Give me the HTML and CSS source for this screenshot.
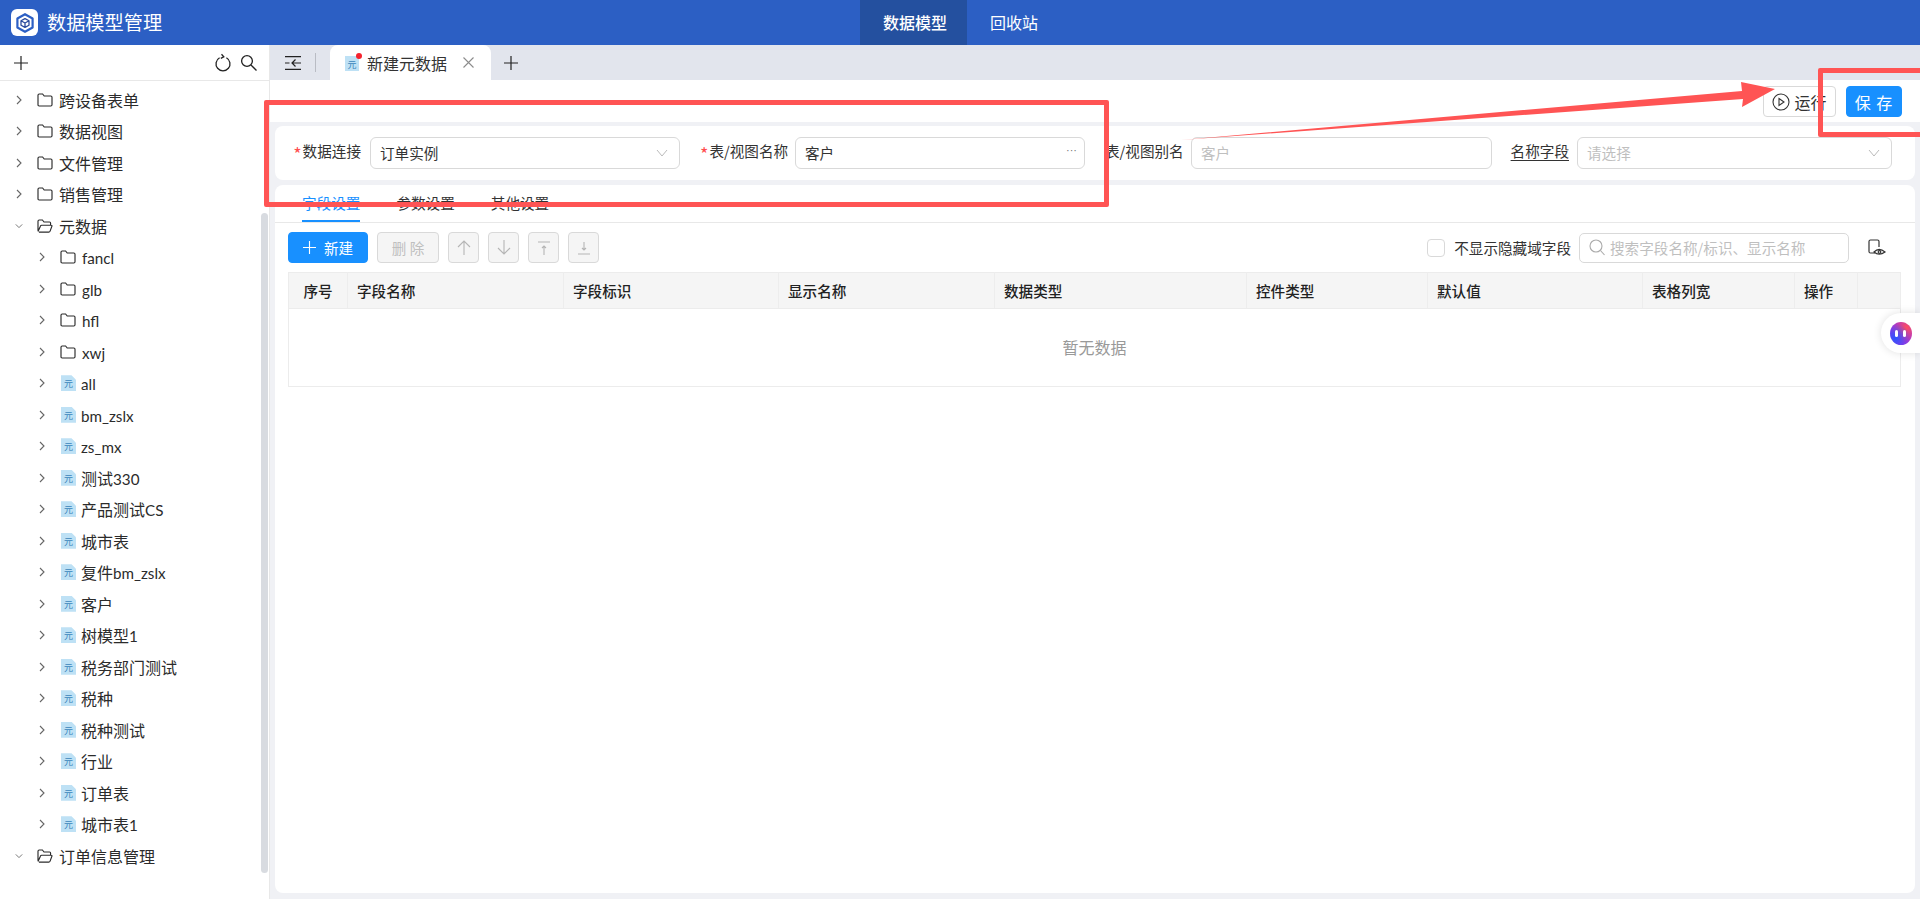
FILE: index.html
```html
<!DOCTYPE html>
<html lang="zh-CN">
<head>
    <meta charset="UTF-8">
    <title>数据模型管理</title>
    <link rel="stylesheet" href="styles.css">
</head>
<body>
    <svg class="icon-defs" aria-hidden="true">
        <symbol id="ic-right" viewBox="0 0 8 10"><path d="M2 1l4 4-4 4" fill="none" stroke="#666" stroke-width="1.1"/></symbol>
        <symbol id="ic-down" viewBox="0 0 10 8"><path d="M1 2l4 4 4-4" fill="none" stroke="#666" stroke-width="1.1"/></symbol>
        <symbol id="ic-folder" viewBox="0 0 16 14"><path d="M1 2.2q0-1.2 1.2-1.2h3.4l1.6 2h6.6q1.2 0 1.2 1.2v7.6q0 1.2-1.2 1.2H2.2Q1 13 1 11.8z" fill="none" stroke="#2b2b2b" stroke-width="1.15"/></symbol>
        <symbol id="ic-folder-open" viewBox="0 0 16 14"><path d="M1 11.8V2.2Q1 1 2.2 1h3.2l1.6 2h5.6q1 0 1 1.2V6M1 12.6l2.4-5.4q.3-1 1.3-1h9.4q1.2 0 .8 1.1l-1.8 4.8q-.4 1-1.4 1H1.9" fill="none" stroke="#2b2b2b" stroke-width="1.15"/></symbol>
        <symbol id="ic-plus" viewBox="0 0 14 14"><path d="M7 0v14M0 7h14" fill="none" stroke="currentColor" stroke-width="1.2"/></symbol>
    </svg>

    <header class="topbar">
        <div class="brand">
            <span class="brand-logo">
                <svg width="20" height="20" viewBox="0 0 20 20" fill="none" stroke="#2c5fc4">
                    <path d="M10 1.2l7.6 4.3v9L10 18.8l-7.6-4.3v-9z" stroke-width="2.2" stroke-linejoin="round"/>
                    <path d="M10 5.6l4 2.2v4.4l-4 2.2-4-2.2V7.800zM6 7.800l4 2.2 4-2.200M10 10v4.400" stroke="#2a4a9c" stroke-width="1.3" stroke-linejoin="round"/>
                </svg>
            </span>
            <span class="brand-title">数据模型管理</span>
        </div>
        <nav class="topnav">
            <a class="topnav-item active">数据模型</a>
            <a class="topnav-item">回收站</a>
        </nav>
    </header>

    <div class="layout">
        <aside class="sidebar">
            <div class="sidebar-tools">
                <svg class="tool-add" width="14" height="14"><use href="#ic-plus"/></svg>
                <svg class="tool-refresh" width="18" height="20" viewBox="0 0 18 20" fill="none" stroke="#222" stroke-width="1.3">
                    <path d="M5.600 4.700a7 7 0 1 0 6.800 0"/>
                    <path d="M7.500 1.200l2.300 2.600-3 1.600"/>
                </svg>
                <svg class="tool-search" width="18" height="18" viewBox="0 0 18 18" fill="none" stroke="#222" stroke-width="1.3">
                    <circle cx="7" cy="7" r="5.400"/>
                    <path d="M11 11l5.500 5.500"/>
                </svg>
            </div>
            <ul class="tree">
                <li class="tree-row"><svg class="tree-arrow"><use href="#ic-right"/></svg><svg class="tree-folder"><use href="#ic-folder"/></svg><span>跨设备表单</span></li>
                <li class="tree-row"><svg class="tree-arrow"><use href="#ic-right"/></svg><svg class="tree-folder"><use href="#ic-folder"/></svg><span>数据视图</span></li>
                <li class="tree-row"><svg class="tree-arrow"><use href="#ic-right"/></svg><svg class="tree-folder"><use href="#ic-folder"/></svg><span>文件管理</span></li>
                <li class="tree-row"><svg class="tree-arrow"><use href="#ic-right"/></svg><svg class="tree-folder"><use href="#ic-folder"/></svg><span>销售管理</span></li>
                <li class="tree-row"><svg class="tree-arrow"><use href="#ic-down"/></svg><svg class="tree-folder"><use href="#ic-folder-open"/></svg><span>元数据</span></li>
                <li class="tree-row sub"><svg class="tree-arrow"><use href="#ic-right"/></svg><svg class="tree-folder"><use href="#ic-folder"/></svg><span><b class="lat">fancl</b></span></li>
                <li class="tree-row sub"><svg class="tree-arrow"><use href="#ic-right"/></svg><svg class="tree-folder"><use href="#ic-folder"/></svg><span><b class="lat">glb</b></span></li>
                <li class="tree-row sub"><svg class="tree-arrow"><use href="#ic-right"/></svg><svg class="tree-folder"><use href="#ic-folder"/></svg><span><b class="lat">hfl</b></span></li>
                <li class="tree-row sub"><svg class="tree-arrow"><use href="#ic-right"/></svg><svg class="tree-folder"><use href="#ic-folder"/></svg><span><b class="lat">xwj</b></span></li>
                <li class="tree-row sub"><svg class="tree-arrow"><use href="#ic-right"/></svg><i class="doc-icon">元</i><span><b class="lat">all</b></span></li>
                <li class="tree-row sub"><svg class="tree-arrow"><use href="#ic-right"/></svg><i class="doc-icon">元</i><span><b class="lat">bm_zslx</b></span></li>
                <li class="tree-row sub"><svg class="tree-arrow"><use href="#ic-right"/></svg><i class="doc-icon">元</i><span><b class="lat">zs_mx</b></span></li>
                <li class="tree-row sub"><svg class="tree-arrow"><use href="#ic-right"/></svg><i class="doc-icon">元</i><span>测试<b class="lat">330</b></span></li>
                <li class="tree-row sub"><svg class="tree-arrow"><use href="#ic-right"/></svg><i class="doc-icon">元</i><span>产品测试<b class="lat">CS</b></span></li>
                <li class="tree-row sub"><svg class="tree-arrow"><use href="#ic-right"/></svg><i class="doc-icon">元</i><span>城市表</span></li>
                <li class="tree-row sub"><svg class="tree-arrow"><use href="#ic-right"/></svg><i class="doc-icon">元</i><span>复件<b class="lat">bm_zslx</b></span></li>
                <li class="tree-row sub"><svg class="tree-arrow"><use href="#ic-right"/></svg><i class="doc-icon">元</i><span>客户</span></li>
                <li class="tree-row sub"><svg class="tree-arrow"><use href="#ic-right"/></svg><i class="doc-icon">元</i><span>树模型<b class="lat">1</b></span></li>
                <li class="tree-row sub"><svg class="tree-arrow"><use href="#ic-right"/></svg><i class="doc-icon">元</i><span>税务部门测试</span></li>
                <li class="tree-row sub"><svg class="tree-arrow"><use href="#ic-right"/></svg><i class="doc-icon">元</i><span>税种</span></li>
                <li class="tree-row sub"><svg class="tree-arrow"><use href="#ic-right"/></svg><i class="doc-icon">元</i><span>税种测试</span></li>
                <li class="tree-row sub"><svg class="tree-arrow"><use href="#ic-right"/></svg><i class="doc-icon">元</i><span>行业</span></li>
                <li class="tree-row sub"><svg class="tree-arrow"><use href="#ic-right"/></svg><i class="doc-icon">元</i><span>订单表</span></li>
                <li class="tree-row sub"><svg class="tree-arrow"><use href="#ic-right"/></svg><i class="doc-icon">元</i><span>城市表<b class="lat">1</b></span></li>
                <li class="tree-row"><svg class="tree-arrow"><use href="#ic-down"/></svg><svg class="tree-folder"><use href="#ic-folder-open"/></svg><span>订单信息管理</span></li>
            </ul>
            <div class="sidebar-thumb"></div>
        </aside>

        <main class="main">
            <div class="tabbar">
                <button class="collapse-btn">
                    <svg width="16" height="14" viewBox="0 0 16 14" fill="none" stroke="#222" stroke-width="1.200">
                        <path d="M0 .6h16M0 13.400h16M0 7h4.500M16 7H7M10.500 3.500L7 7l3.500 3.500"/>
                    </svg>
                </button>
                <span class="tabbar-divider"></span>
                <div class="page-tab">
                    <i class="doc-icon tab-doc">元</i>
                    <span class="page-tab-dot"></span>
                    <span class="page-tab-name">新建元数据</span>
                    <svg class="page-tab-close" width="11" height="11" viewBox="0 0 11 11" fill="none" stroke="#8c8c8c" stroke-width="1.100">
                        <path d="M.5.500l10 10M10.500.500l-10 10"/>
                    </svg>
                </div>
                <svg class="tab-add" width="14" height="14"><use href="#ic-plus"/></svg>
            </div>

            <div class="actions">
                <button class="btn btn-run">
                    <svg width="18" height="18" viewBox="0 0 18 18" fill="none" stroke="#333" stroke-width="1.100">
                        <circle cx="9" cy="9" r="8"/>
                        <path d="M7 5.500l5 3.500-5 3.500z"/>
                    </svg>
                    运行
                </button>
                <button class="btn btn-save">保 存</button>
            </div>

            <div class="content">
                <section class="card form-card">
                    <div class="form-item item-conn">
                        <label class="form-label"><em>*</em>数据连接</label>
                        <div class="field">订单实例
                            <svg class="field-arrow" width="12" height="8" viewBox="0 0 12 8"><path d="M1 1l5 6 5-6" fill="none" stroke="#bbb"/></svg>
                        </div>
                    </div>
                    <div class="form-item item-table">
                        <label class="form-label"><em>*</em>表/视图名称</label>
                        <div class="field">客户<span class="field-more">···</span></div>
                    </div>
                    <div class="form-item item-alias">
                        <label class="form-label">表/视图别名</label>
                        <div class="field placeholder">客户</div>
                    </div>
                    <div class="form-item item-name">
                        <label class="form-label"><u>名称字段</u></label>
                        <div class="field placeholder">请选择
                            <svg class="field-arrow" width="12" height="8" viewBox="0 0 12 8"><path d="M1 1l5 6 5-6" fill="none" stroke="#bbb"/></svg>
                        </div>
                    </div>
                </section>

                <section class="card table-card">
                    <div class="sub-tabs">
                        <a class="sub-tab active">字段设置</a>
                        <a class="sub-tab">参数设置</a>
                        <a class="sub-tab">其他设置</a>
                    </div>

                    <div class="table-tools">
                        <button class="btn btn-primary">
                            <svg width="13" height="13"><use href="#ic-plus"/></svg>
                            新建
                        </button>
                        <button class="btn btn-disabled btn-delete">删 除</button>
                        <button class="btn btn-disabled btn-icon">
                            <svg width="14" height="15" viewBox="0 0 14 15" fill="none" stroke="#b5b5b5" stroke-width="1.100"><path d="M7 1v14M1 7l6-6 6 6"/></svg>
                        </button>
                        <button class="btn btn-disabled btn-icon">
                            <svg width="14" height="15" viewBox="0 0 14 15" fill="none" stroke="#b5b5b5" stroke-width="1.100"><path d="M7 0v14M1 8l6 6 6-6"/></svg>
                        </button>
                        <button class="btn btn-disabled btn-icon">
                            <svg width="12" height="14" viewBox="0 0 12 14" fill="none" stroke="#b5b5b5" stroke-width="1.100"><path d="M0 1h12M6 5v9M4 7l2-2 2 2"/></svg>
                        </button>
                        <button class="btn btn-disabled btn-icon">
                            <svg width="12" height="14" viewBox="0 0 12 14" fill="none" stroke="#b5b5b5" stroke-width="1.100"><path d="M0 13h12M6 1v8M4 7l2 2 2-2"/></svg>
                        </button>
                        <div class="tools-right">
                            <span class="checkbox"></span>
                            <span class="checkbox-label">不显示隐藏域字段</span>
                            <div class="search-box">
                                <svg width="16" height="17" viewBox="0 0 16 17" fill="none" stroke="#aaa" stroke-width="1.100"><circle cx="7" cy="7" r="6"/><path d="M11.500 11.500l4 4.500"/></svg>
                                搜索字段名称/标识、显示名称
                            </div>
                            <svg class="view-icon" width="18" height="17" viewBox="0 0 18 17" fill="none" stroke="#333" stroke-width="1.200">
                                <path d="M7 14H2.500Q1 14 1 12.500V2.500Q1 1 2.500 1h7Q11 1 11 2.500V8"/>
                                <path d="M6 13q5-5 11 0-6 4.500-11 0z"/>
                                <circle cx="11.500" cy="13" r="1.300"/>
                            </svg>
                        </div>
                    </div>

                    <table class="field-table">
                        <colgroup>
                            <col class="c-no"><col class="c-name"><col class="c-id"><col class="c-show"><col class="c-type">
                            <col class="c-ctrl"><col class="c-def"><col class="c-width"><col class="c-op"><col class="c-end">
                        </colgroup>
                        <thead>
                            <tr>
                                <th class="center">序号</th>
                                <th>字段名称</th>
                                <th>字段标识</th>
                                <th>显示名称</th>
                                <th>数据类型</th>
                                <th>控件类型</th>
                                <th>默认值</th>
                                <th>表格列宽</th>
                                <th>操作</th>
                                <th></th>
                            </tr>
                        </thead>
                        <tbody>
                            <tr><td class="empty" colspan="10">暂无数据</td></tr>
                        </tbody>
                    </table>
                </section>
            </div>
        </main>
    </div>

    <div class="assistant"><span class="assistant-face"><i></i><i></i></span></div>

    <!-- red annotations drawn on top of the screenshot -->
    <div class="mark mark-form"></div>
    <div class="mark mark-save"></div>
    <svg class="mark-arrow" width="1920" height="899">
        <polygon points="1181,140 1742,91 1741,82 1775,89 1742,107 1743,99" fill="#ff5454"/>
    </svg>
</body>
</html>
```

FILE: styles.css
```css
* {
    margin: 0;
    padding: 0;
    box-sizing: border-box;
}

html, body {
    height: 100%;
    overflow: hidden;
}

body {
    font-family: "Noto Sans CJK SC", "Noto Sans", sans-serif;
    font-size: 14.6px;
    color: #333;
    background: #fff;
    display: flex;
    flex-direction: column;
}

button {
    font-family: inherit;
}

.icon-defs {
    display: none;
}

/* top bar */
.topbar {
    height: 45px;
    flex-shrink: 0;
    background: #2c5fc4;
    color: #fff;
    display: flex;
}

.brand {
    width: 860px;
    display: flex;
    align-items: center;
    padding-left: 11px;
}

.brand-logo {
    width: 27px;
    height: 27px;
    background: #fff;
    border-radius: 6px;
    display: flex;
    align-items: center;
    justify-content: center;
}

.brand-title {
    margin-left: 9px;
    font-size: 19.2px;
    line-height: 45px;
}

.topnav {
    display: flex;
}

.topnav-item {
    padding: 0 20px 0 23px;
    font-size: 16px;
    line-height: 45px;
}

.topnav-item.active {
    background: #24509f;
    font-weight: 500;
}

.layout {
    flex: 1;
    display: flex;
    min-height: 0;
}

/* left tree */
.sidebar {
    width: 270px;
    flex-shrink: 0;
    border-right: 1px solid #e8e8e8;
    position: relative;
    overflow: hidden;
}

.sidebar-tools {
    height: 36px;
    border-bottom: 1px solid #e8e8e8;
    display: flex;
    align-items: center;
    padding: 0 11px 0 14px;
    color: #222;
}

.tool-add {
    margin-right: auto;
}

.tool-refresh {
    margin-right: 8px;
}

.tree {
    list-style: none;
    padding-top: 3px;
}

.tree-row {
    height: 31.5px;
    display: flex;
    align-items: center;
    padding-left: 15px;
    font-size: 16px;
    color: #2b2b2b;
}

.tree-row.sub {
    padding-left: 38px;
}

.lat {
    font-family: Lato, sans-serif;
    font-size: 15.2px;
    font-weight: 400;
}

.tree-arrow {
    width: 8px;
    height: 10px;
    margin-right: 14px;
}

.tree-folder {
    width: 16px;
    height: 14px;
    margin-right: 6px;
}

.doc-icon {
    width: 15px;
    height: 16px;
    margin: 0 5px 0 1px;
    background: #bee1f5;
    color: #3a85bb;
    font-size: 9px;
    font-style: normal;
    line-height: 17px;
    text-align: center;
    clip-path: polygon(0 0, 70% 0, 100% 28%, 100% 100%, 0 100%);
    flex-shrink: 0;
}

.sidebar-thumb {
    position: absolute;
    left: 261px;
    top: 168px;
    width: 7px;
    height: 660px;
    background: #d8dbe0;
    border-radius: 4px;
}

/* tab strip */
.main {
    flex: 1;
    min-width: 0;
    display: flex;
    flex-direction: column;
}

.tabbar {
    height: 35px;
    flex-shrink: 0;
    background: #e2e5ed;
    display: flex;
    align-items: center;
}

.collapse-btn {
    border: none;
    background: none;
    margin-left: 15px;
    width: 16px;
    height: 14px;
    display: flex;
}

.tabbar-divider {
    width: 1px;
    height: 19px;
    background: #b9bcc4;
    margin: 0 14px;
}

.page-tab {
    width: 161px;
    height: 35px;
    background: #fff;
    border-radius: 8px 8px 0 0;
    display: flex;
    align-items: center;
    padding-left: 15px;
    position: relative;
}

.tab-doc {
    clip-path: none;
    margin: 0 0 0 0;
    width: 14px;
    height: 15px;
    margin-top: 2px;
}

.page-tab-dot {
    position: absolute;
    left: 26px;
    top: 8px;
    width: 6px;
    height: 6px;
    border-radius: 50%;
    background: #f5222d;
}

.page-tab-name {
    margin-left: 8px;
    font-size: 16px;
    color: #333;
}

.page-tab-close {
    margin-left: 16px;
}

.tab-add {
    margin-left: 13px;
    color: #222;
}

/* run / save */
.actions {
    height: 42px;
    flex-shrink: 0;
    display: flex;
    justify-content: flex-end;
    gap: 10px;
    padding: 6px 18px 0 0;
}

.btn {
    height: 31px;
    border-radius: 4px;
    border: 1px solid #d9d9d9;
    background: #fff;
    display: flex;
    align-items: center;
    justify-content: center;
    font-size: 14.6px;
    color: #333;
}

.btn-run {
    width: 73px;
    gap: 4px;
    font-size: 16px;
}

.btn-save {
    width: 56px;
    background: #1890ff;
    border-color: #1890ff;
    color: #fff;
    font-size: 16px;
    letter-spacing: 1px;
}

.content {
    flex: 1;
    min-height: 0;
    background: #f0f1f5;
    padding: 4px 5px 6px;
    display: flex;
    flex-direction: column;
    gap: 5px;
}

.card {
    background: #fff;
    border-radius: 8px;
}

/* form row */
.form-card {
    height: 54px;
    flex-shrink: 0;
    display: flex;
    padding: 11px 0 0 18px;
}

.form-item {
    display: flex;
    height: 32px;
}

.item-conn { width: 387px; margin-right: 20px; }
.item-table { width: 385px; margin-right: 20px; }
.item-alias { width: 387px; margin-right: 18px; }
.item-name { width: 382px; }

.item-conn .form-label { width: 77px; padding-right: 9px; }
.item-table .form-label { width: 95px; }
.item-alias .form-label { width: 86px; }
.item-name .form-label { width: 67px; }

.form-label {
    flex-shrink: 0;
    line-height: 28px;
    padding-right: 8px;
    text-align: right;
    color: #333;
    white-space: nowrap;
}

.form-label em {
    color: #ff4d4f;
    font-style: normal;
    font-size: 18px;
    line-height: 20px;
    vertical-align: -4px;
    margin-right: 1px;
}

.form-label u {
    text-underline-offset: 3px;
}

.field {
    flex: 1;
    border: 1px solid #d9d9d9;
    border-radius: 6px;
    padding: 0 9px;
    line-height: 30px;
    position: relative;
    color: #333;
}

.field.placeholder {
    color: #bfbfbf;
}

.field-arrow {
    position: absolute;
    right: 11px;
    top: 11px;
}

.field-more {
    position: absolute;
    right: 7px;
    top: -3px;
    color: #777;
    font-family: "Liberation Sans", sans-serif;
    font-size: 11px;
}

/* field table card */
.table-card {
    flex: 1;
    min-height: 0;
}

.sub-tabs {
    height: 38px;
    border-bottom: 1px solid #e8e8e8;
    display: flex;
    gap: 36px;
    padding-left: 27px;
}

.sub-tab {
    height: 37px;
    line-height: 36px;
    color: #333;
}

.sub-tab.active {
    color: #1890ff;
    border-bottom: 2px solid #1890ff;
}

.table-tools {
    height: 49px;
    display: flex;
    align-items: flex-start;
    gap: 9px;
    padding: 9px 15px 0 13px;
}

.btn-primary {
    width: 80px;
    background: #1890ff;
    border-color: #1890ff;
    color: #fff;
    gap: 8px;
}

.btn-disabled {
    background: #f5f5f5;
    color: #bfbfbf;
}

.btn-delete {
    width: 62px;
}

.btn-icon {
    width: 31px;
}

.tools-right {
    margin-left: auto;
    display: flex;
    align-items: center;
    height: 31px;
}

.checkbox {
    width: 18px;
    height: 18px;
    border: 1px solid #d9d9d9;
    border-radius: 4px;
}

.checkbox-label {
    margin-left: 9px;
    color: #333;
}

.search-box {
    width: 270px;
    height: 30px;
    margin-left: 8px;
    border: 1px solid #d9d9d9;
    border-radius: 5px;
    display: flex;
    align-items: center;
    gap: 5px;
    padding-left: 9px;
    color: #bfbfbf;
}

.view-icon {
    margin-left: 19px;
    margin-right: 14px;
}

.field-table {
    width: 1612px;
    margin-left: 13px;
    table-layout: fixed;
    border-collapse: collapse;
    border: 1px solid #ececec;
}

.c-no { width: 59px; }
.c-name { width: 216px; }
.c-id { width: 215px; }
.c-show { width: 216px; }
.c-type { width: 252px; }
.c-ctrl { width: 181px; }
.c-def { width: 215px; }
.c-width { width: 152px; }
.c-op { width: 63px; }
.c-end { width: 43px; }

.field-table th {
    height: 36px;
    background: #f5f5f5;
    border-right: 1px solid #ededed;
    border-bottom: 1px solid #ececec;
    padding-left: 9px;
    text-align: left;
    font-weight: 500;
    color: #222;
}

.field-table th.center {
    text-align: center;
    padding-left: 0;
}

.field-table .empty {
    height: 78px;
    padding-bottom: 2px;
    text-align: center;
    font-size: 16px;
    color: #999;
}

/* floating assistant */
.assistant {
    position: absolute;
    right: 0;
    top: 313px;
    width: 39px;
    height: 40px;
    background: #fff;
    border-radius: 20px 0 0 20px;
    box-shadow: 0 0 8px rgba(0,0,0,0.12);
    display: flex;
    align-items: center;
    justify-content: center;
}

.assistant-face {
    width: 22px;
    height: 23px;
    border-radius: 50%;
    background:
        radial-gradient(circle at 25% 70%, #2a55ff 0%, rgba(42,85,255,0) 65%),
        radial-gradient(circle at 75% 25%, #ff4d5e 0%, rgba(255,77,94,0) 65%),
        #a033e0;
    display: flex;
    align-items: center;
    justify-content: center;
    gap: 5px;
}

.assistant-face i {
    width: 3px;
    height: 7px;
    border-radius: 2px;
    background: #fff;
}

/* annotations */
.mark {
    position: absolute;
    border: 5px solid #ff5454;
    border-radius: 2px;
}

.mark-form {
    left: 264px;
    top: 100px;
    width: 845px;
    height: 107px;
}

.mark-save {
    left: 1818px;
    top: 68px;
    width: 110px;
    height: 69px;
}

.mark-arrow {
    position: absolute;
    left: 0;
    top: 0;
}
```
